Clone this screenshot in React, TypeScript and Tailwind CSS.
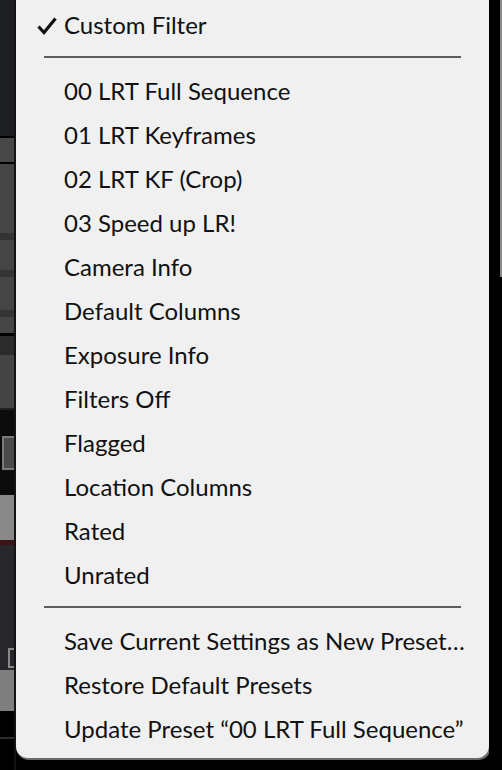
import { Fragment } from 'react';

const PRESETS = [
  '00 LRT Full Sequence',
  '01 LRT Keyframes',
  '02 LRT KF (Crop)',
  '03 Speed up LR!',
  'Camera Info',
  'Default Columns',
  'Exposure Info',
  'Filters Off',
  'Flagged',
  'Location Columns',
  'Rated',
  'Unrated',
];

const ACTIONS = [
  'Save Current Settings as New Preset…',
  'Restore Default Presets',
  'Update Preset “00 LRT Full Sequence”',
];

function Check() {
  return (
    <svg width="20" height="18" viewBox="0 0 20 18" className="absolute left-[21px] top-[14px]">
      <path d="M1.5 9.5 L7 15.5 L18.5 1.5" fill="none" stroke="#111" strokeWidth="3.2" strokeLinejoin="miter" />
    </svg>
  );
}

function Item({ label, checked }: { label: string; checked?: boolean }) {
  return (
    <div className="relative flex h-[44px] items-center pl-[48px] text-[#111]">
      {checked && <Check />}
      <span className="whitespace-nowrap">{label}</span>
    </div>
  );
}

function Separator() {
  return <div className="mx-[28px] my-[9px] mb-[11px] h-[2px] bg-[#5c5c5c]" />;
}

function LeftStrip() {
  return (
    <div className="flex w-[14px] flex-col">
      <div className="h-[136px] bg-[#1d1e22]" />
      <div className="h-[2px] bg-black" />
      <div className="h-[24px] bg-[#474747]" />
      <div className="h-[2px] bg-black" />
      <div className="h-[69px] bg-[#454545]" />
      <div className="h-[7px] bg-[#333]" />
      <div className="h-[30px] bg-[#454545]" />
      <div className="h-[7px] bg-[#353535]" />
      <div className="h-[33px] bg-[#454545]" />
      <div className="h-[7px] bg-[#353535]" />
      <div className="h-[16px] bg-[#454545]" />
      <div className="h-[3px] bg-black" />
      <div className="h-[19px] bg-[#2b2b2b]" />
      <div className="h-[53px] bg-[#444]" />
      <div className="h-[2px] bg-[#222]" />
      <div className="flex h-[85px] items-center bg-[#0b0b0b]">
        <div className="ml-[2px] h-[34px] w-[12px] border-2 border-r-0 border-[#7a7a7a] bg-[#4a4a4a]" />
      </div>
      <div className="h-[45px] bg-[#898989]" />
      <div className="h-[5px] bg-[#3a1414]" />
      <div className="flex h-[125px] items-end bg-[#26262b] pb-[2px]">
        <div className="ml-[8px] h-[20px] w-[6px] border-2 border-r-0 border-[#888]" />
      </div>
      <div className="h-[41px] bg-[#7f7f7f]" />
      <div className="flex h-[57px] flex-col bg-black">
        <div className="mt-[26px] h-[2px] bg-[#2c2c2c]" />
      </div>
    </div>
  );
}

export default function App() {
  return (
    <div className="flex h-[770px] w-[502px] overflow-hidden bg-black font-['Lato','Noto_Sans',sans-serif] text-[24px]">
      <LeftStrip />
      <div className="w-[2px] bg-[#141414]" />
      <div className="flex w-[473px] flex-col">
        <div className="flex h-[758px] flex-col rounded-b-[12px] bg-[#f0f0f0] pt-[3px] shadow-[1px_1px_0_1px_#6a6a6a]">
          <Item label="Custom Filter" checked />
          <Separator />
          {PRESETS.map((p) => (
            <Item key={p} label={p} />
          ))}
          <Separator />
          {ACTIONS.map((a) => (
            <Fragment key={a}>
              <Item label={a} />
            </Fragment>
          ))}
        </div>
      </div>
      <div className="w-[11px] bg-black" />
      <div className="flex w-[2px] flex-col bg-black">
        <div className="h-[277px] bg-[#8a8a8a]" />
      </div>
    </div>
  );
}
